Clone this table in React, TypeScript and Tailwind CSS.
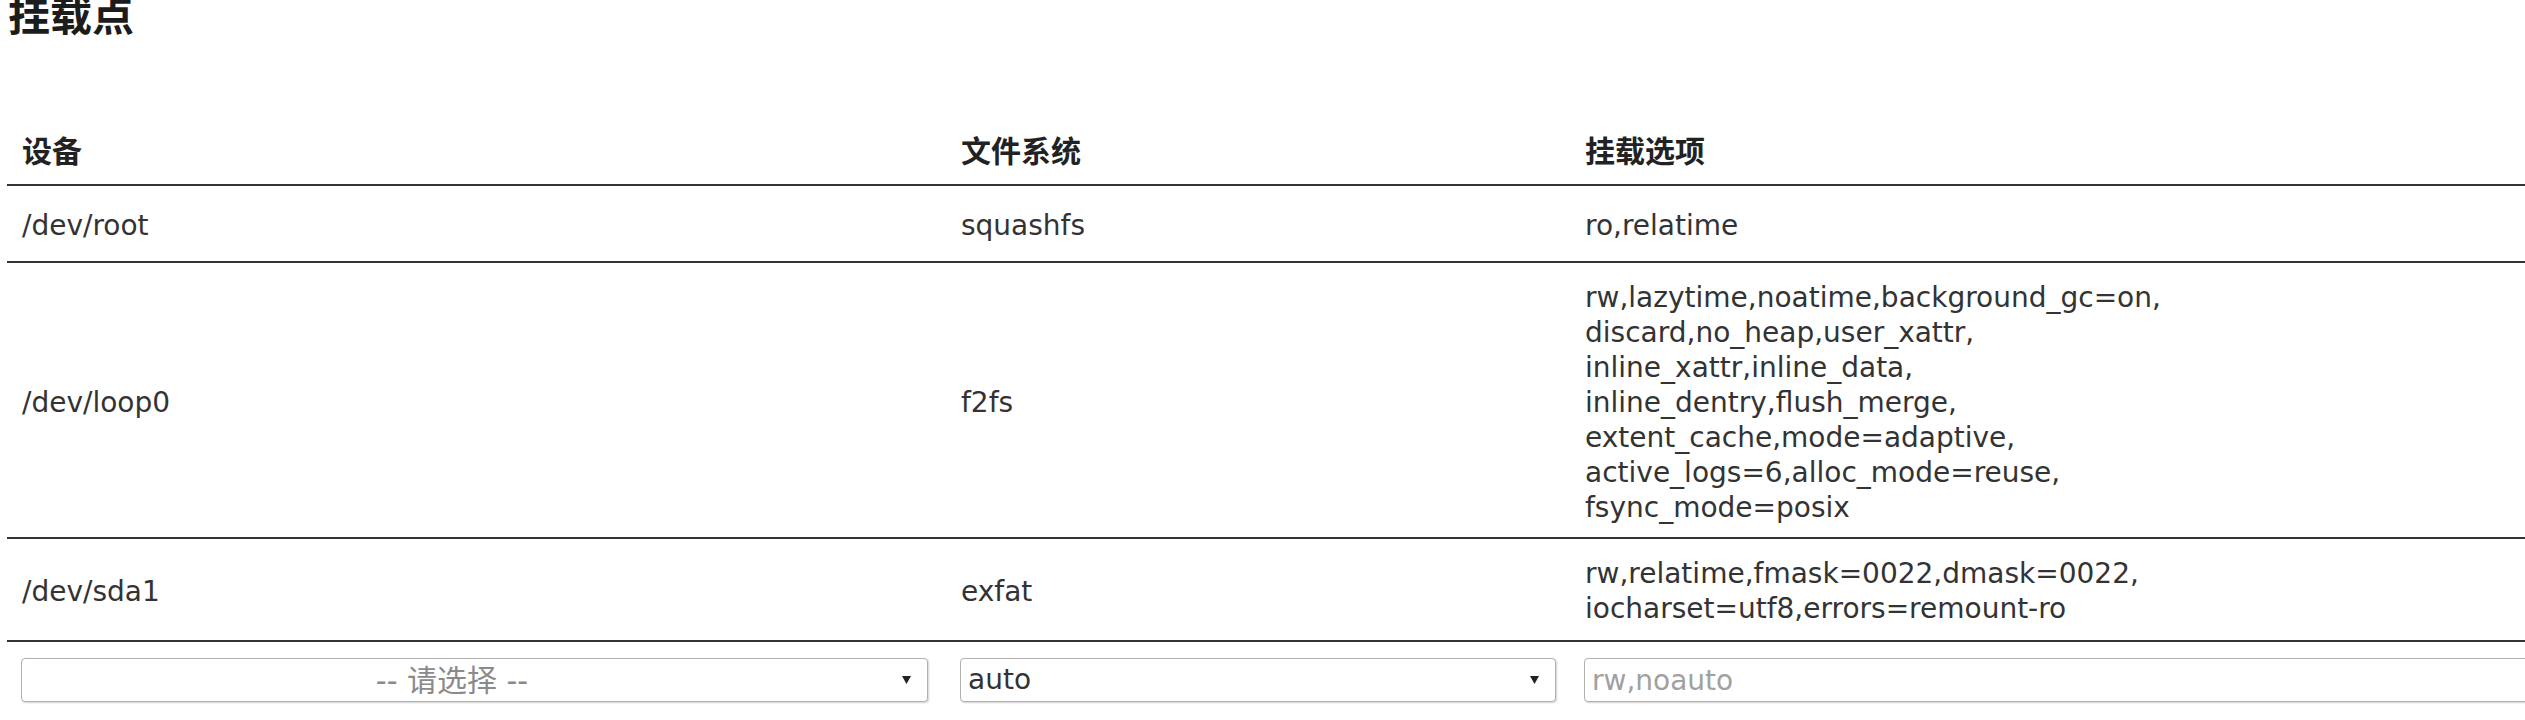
import React from "react";

const FONT = "[font-family:'DejaVu_Sans','Noto_Sans_CJK_SC',sans-serif]";

type Row = { dev: string; fs: string; opts: string[]; pad: string };

const rows: Row[] = [
  { dev: "/dev/root", fs: "squashfs", opts: ["ro,relatime"], pad: "pt-[22px] pb-[18px]" },
  {
    dev: "/dev/loop0",
    fs: "f2fs",
    opts: [
      "rw,lazytime,noatime,background_gc=on,",
      "discard,no_heap,user_xattr,",
      "inline_xattr,inline_data,",
      "inline_dentry,flush_merge,",
      "extent_cache,mode=adaptive,",
      "active_logs=6,alloc_mode=reuse,",
      "fsync_mode=posix",
    ],
    pad: "pt-[17px] pb-[12px]",
  },
  {
    dev: "/dev/sda1",
    fs: "exfat",
    opts: ["rw,relatime,fmask=0022,dmask=0022,", "iocharset=utf8,errors=remount-ro"],
    pad: "pt-[17px] pb-[14px]",
  },
];

function Arrow() {
  return (
    <svg width="9" height="8" viewBox="0 0 9 8" className="shrink-0">
      <polygon points="0,0 9,0 4.5,8" fill="#222" />
    </svg>
  );
}

export default function App() {
  return (
    <div className={`w-[2525px] h-[720px] overflow-hidden bg-white text-[#333] ${FONT}`}>
      <h2 className="mb-[86px] pl-[8px] text-[42px] leading-[34px] font-bold text-[#1c1c1c]">
        挂载点
      </h2>
      <div className="ml-[7px] w-[2700px]">
        <div className="grid grid-cols-[939px_624px_1fr] border-b-2 border-[#333] pt-[14px] pb-[15px] text-[30px] leading-[35px] font-bold text-[#222]">
          <div className="pl-[15px]">设备</div>
          <div className="pl-[15px]">文件系统</div>
          <div className="pl-[15px]">挂载选项</div>
        </div>
        {rows.map((r) => (
          <div
            key={r.dev}
            className={`grid grid-cols-[939px_624px_1fr] items-center border-b-2 border-[#333] text-[28px] leading-[35px] ${r.pad}`}
          >
            <div className="pl-[15px]">{r.dev}</div>
            <div className="pl-[15px]">{r.fs}</div>
            <div className="pl-[15px]">
              {r.opts.map((o) => (
                <div key={o}>{o}</div>
              ))}
            </div>
          </div>
        ))}
        <div className="grid grid-cols-[939px_624px_1fr] items-center pt-[16px] text-[28px]">
          <div className="pl-[14px]">
            <div className="flex h-[44px] w-[907px] items-center rounded-[4px] border border-[#b0b0b0] bg-white pr-[16px] shadow-[1px_1px_2px_rgba(0,0,0,0.18)]">
              <div className="flex-1 pr-[20px] text-center text-[30px] text-[#8a8a8a]">-- 请选择 --</div>
              <Arrow />
            </div>
          </div>
          <div className="pl-[14px]">
            <div className="flex h-[44px] w-[596px] items-center rounded-[4px] border border-[#b0b0b0] bg-white pl-[7px] pr-[16px] shadow-[1px_1px_2px_rgba(0,0,0,0.18)]">
              <div className="flex-1 text-[#333]">auto</div>
              <Arrow />
            </div>
          </div>
          <div className="pl-[14px]">
            <input
              readOnly
              placeholder="rw,noauto"
              className="h-[44px] w-[1100px] rounded-[4px] border border-[#b0b0b0] bg-white pl-[7px] text-[28px] text-[#333] placeholder:text-[#a0a0a0] shadow-[1px_1px_2px_rgba(0,0,0,0.18)] outline-none"
            />
          </div>
        </div>
      </div>
    </div>
  );
}
